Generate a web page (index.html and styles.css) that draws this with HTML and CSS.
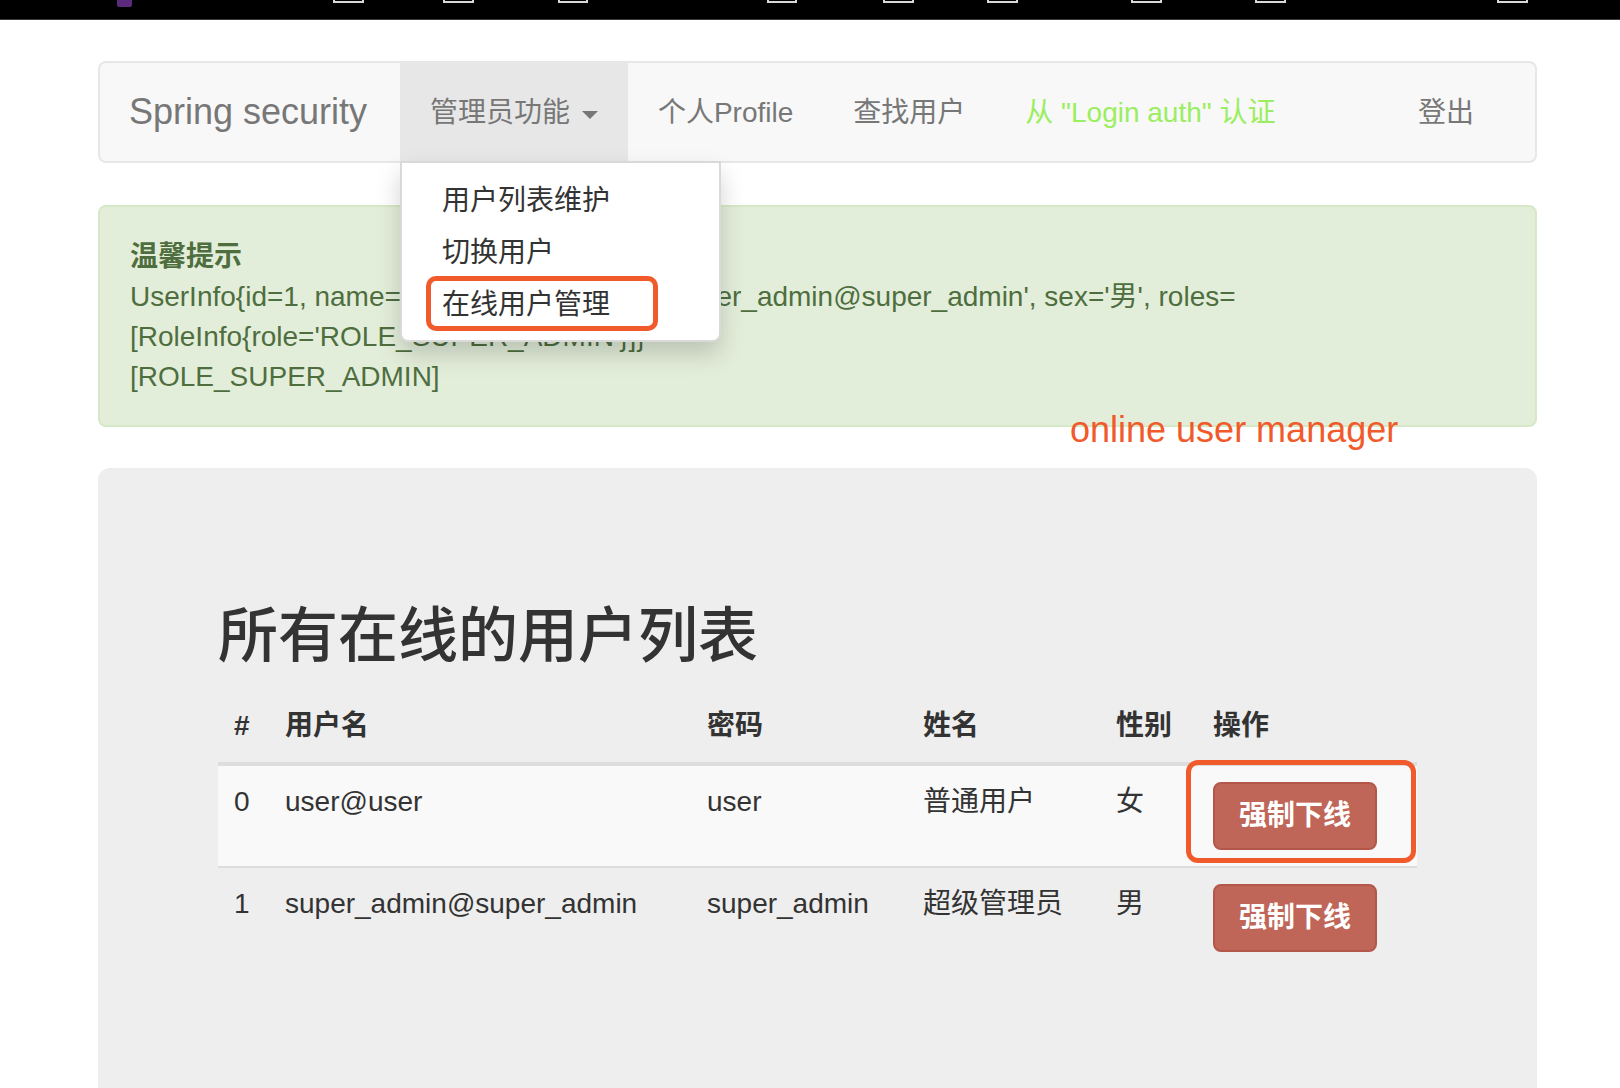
FILE: index.html
```html
<!DOCTYPE html>
<html lang="zh-CN">
<head>
<meta charset="utf-8">
<title>所有在线的用户列表</title>
<link rel="stylesheet" href="styles.css">
</head>
<body>
<div class="chrome">
  <i></i><b class="app"></b>
  <i></i><b class="bm"></b>
  <i></i><b class="bm"></b>
  <i></i><b class="bm"></b>
  <i></i><b class="bm"></b>
  <i></i><b class="bm"></b>
  <i></i><b class="bm"></b>
  <i></i><b class="bm"></b>
  <i></i><b class="bm"></b>
  <i></i><b class="bm"></b>
</div>
<div class="page">
  <nav class="navbar">
    <a class="brand">Spring security</a>
    <ul class="nav">
      <li class="dropdown open">
        <a>管理员功能 <span class="caret"></span></a>
        <ul class="dropdown-menu">
          <li><a>用户列表维护</a></li>
          <li><a>切换用户</a></li>
          <li class="marked"><a>在线用户管理</a></li>
        </ul>
      </li>
      <li><a>个人Profile</a></li>
      <li><a>查找用户</a></li>
      <li><a class="auth">从 "Login auth" 认证</a></li>
    </ul>
    <ul class="nav nav-right">
      <li><a>登出</a></li>
    </ul>
  </nav>

  <div class="alert">
    <strong>温馨提示</strong>
    <span class="line">UserInfo{id=1, name='超级管理员', e_mail='super_admin@super_admin', sex='男', roles=</span>
    <span class="line">[RoleInfo{role='ROLE_SUPER_ADMIN'}]}</span>
    <span class="line">[ROLE_SUPER_ADMIN]</span>
    <span class="note">online user manager</span>
  </div>

  <div class="jumbotron">
    <h2>所有在线的用户列表</h2>
    <table class="table">
      <colgroup>
        <col class="c1"><col class="c2"><col class="c3"><col class="c4"><col class="c5"><col class="c6">
      </colgroup>
      <thead>
        <tr><th>#</th><th>用户名</th><th>密码</th><th>姓名</th><th>性别</th><th>操作</th></tr>
      </thead>
      <tbody>
        <tr class="odd">
          <td>0</td><td>user@user</td><td>user</td><td>普通用户</td><td>女</td>
          <td><div class="act"><span class="hl"><button class="btn">强制下线</button></span></div></td>
        </tr>
        <tr>
          <td>1</td><td>super_admin@super_admin</td><td>super_admin</td><td>超级管理员</td><td>男</td>
          <td><div class="act"><span><button class="btn">强制下线</button></span></div></td>
        </tr>
      </tbody>
    </table>
  </div>
</div>
</body>
</html>
```

FILE: styles.css
```css
*, *::before, *::after { box-sizing: border-box; }
html, body { margin: 0; padding: 0; }
body {
  background: #fff;
  font-family: "Liberation Sans", "Noto Sans CJK SC", sans-serif;
  font-size: 28px;
  line-height: 40px;
  color: #333;
  height: 1088px;
  overflow: hidden;
}

/* browser chrome strip */
.chrome {
  height: 20px;
  background: #000;
  border-bottom: 1px solid #3a3a3a;
  display: grid;
  grid-template-columns: 117px 15px 201px 31px 79px 31px 84px 30px 179px 30px 86px 31px 73px 31px 113px 31px 93px 31px 211px 31px;
  align-items: start;
}
.chrome .app { height: 7px; background: #5b2a7a; border-radius: 0 0 2px 2px; }
.chrome .bm { height: 3px; border: 2px solid #d8d8d8; border-top: 0; }

.page { padding: 41px 83px 0 98px; }

/* navbar */
.navbar {
  display: flex;
  height: 102px;
  border: 2px solid #e7e7e7;
  border-radius: 8px;
  background: #f8f8f8;
  margin-bottom: 42px;
}
.brand {
  padding: 0 33px 0 29px;
  font-size: 36px;
  line-height: 98px;
  color: #777;
  white-space: nowrap;
}
.nav { list-style: none; margin: 0; padding: 0; display: flex; }
.nav > li { position: relative; }
.nav > li > a {
  display: block;
  padding: 30px 30px 28px;
  line-height: 40px;
  color: #777;
  white-space: nowrap;
}
.dropdown.open > a { background: #e7e7e7; }
.caret {
  display: inline-block;
  width: 0;
  height: 0;
  margin-left: 4px;
  vertical-align: middle;
  border-top: 8px solid #777;
  border-left: 8px solid transparent;
  border-right: 8px solid transparent;
}
.auth { color: #9aee5f !important; }
.nav-right { margin-left: auto; margin-right: 31px; }

.dropdown-menu {
  position: absolute;
  top: 100%;
  left: 0;
  width: 321px;
  margin: 0;
  padding: 12px 0 9px;
  list-style: none;
  background: #fff;
  border: 2px solid rgba(0, 0, 0, 0.15);
  border-radius: 0 0 8px 8px;
  box-shadow: 0 12px 24px rgba(0, 0, 0, 0.175);
  z-index: 1000;
}
.dropdown-menu a {
  display: block;
  padding: 6px 40px;
  line-height: 40px;
  color: #333;
  white-space: nowrap;
}
.marked { position: relative; }
.marked::after {
  content: "";
  position: absolute;
  left: 24px;
  top: -3px;
  width: 232px;
  height: 55px;
  border: 5px solid #f15a2b;
  border-radius: 10px;
}

/* alert */
.alert {
  position: relative;
  padding: 30px 30px 28px;
  border: 2px solid #d6e9c6;
  border-radius: 8px;
  background: #e3eeda;
  color: #4f6e3f;
  margin-bottom: 41px;
}
.alert strong { display: block; font-weight: bold; }
.alert .line { display: block; white-space: nowrap; }
.note {
  position: absolute;
  left: 970px;
  top: 203px;
  font-size: 36px;
  line-height: 40px;
  color: #f15a2b;
  white-space: nowrap;
}

/* jumbotron */
.jumbotron {
  background: #eee;
  border-radius: 12px;
  padding: 96px 120px;
}
.jumbotron h2 {
  margin: 40px 0 20px;
  font-size: 60px;
  line-height: 66px;
  font-weight: 500;
  color: #333;
}

.table {
  width: 100%;
  border-collapse: collapse;
  table-layout: fixed;
  margin-bottom: 40px;
}
.c1 { width: 51px; }
.c2 { width: 422px; }
.c3 { width: 216px; }
.c4 { width: 193px; }
.c5 { width: 97px; }
.c6 { width: 220px; }
.table th {
  text-align: left;
  padding: 16px;
  line-height: 40px;
  font-weight: bold;
  border-bottom: 4px solid #ddd;
  vertical-align: bottom;
  white-space: nowrap;
}
.table td {
  padding: 16px;
  line-height: 40px;
  border-top: 2px solid #ddd;
  vertical-align: top;
  white-space: nowrap;
}
.table tbody tr:first-child td { border-top: 0; }
.table tr.odd td { background: #f9f9f9; }

.act { display: flex; align-items: flex-start; }
.act > span { display: block; position: relative; }
.btn {
  display: block;
  margin: 0;
  padding: 12px 24px;
  font-family: inherit;
  font-size: 28px;
  line-height: 40px;
  font-weight: bold;
  color: #fff;
  background: #bf6659;
  border: 2px solid #b3574b;
  border-radius: 8px;
}
.hl::after {
  content: "";
  position: absolute;
  left: -27px;
  right: -39px;
  top: -22px;
  bottom: -13px;
  border: 5px solid #f15a2b;
  border-radius: 12px;
}
```
